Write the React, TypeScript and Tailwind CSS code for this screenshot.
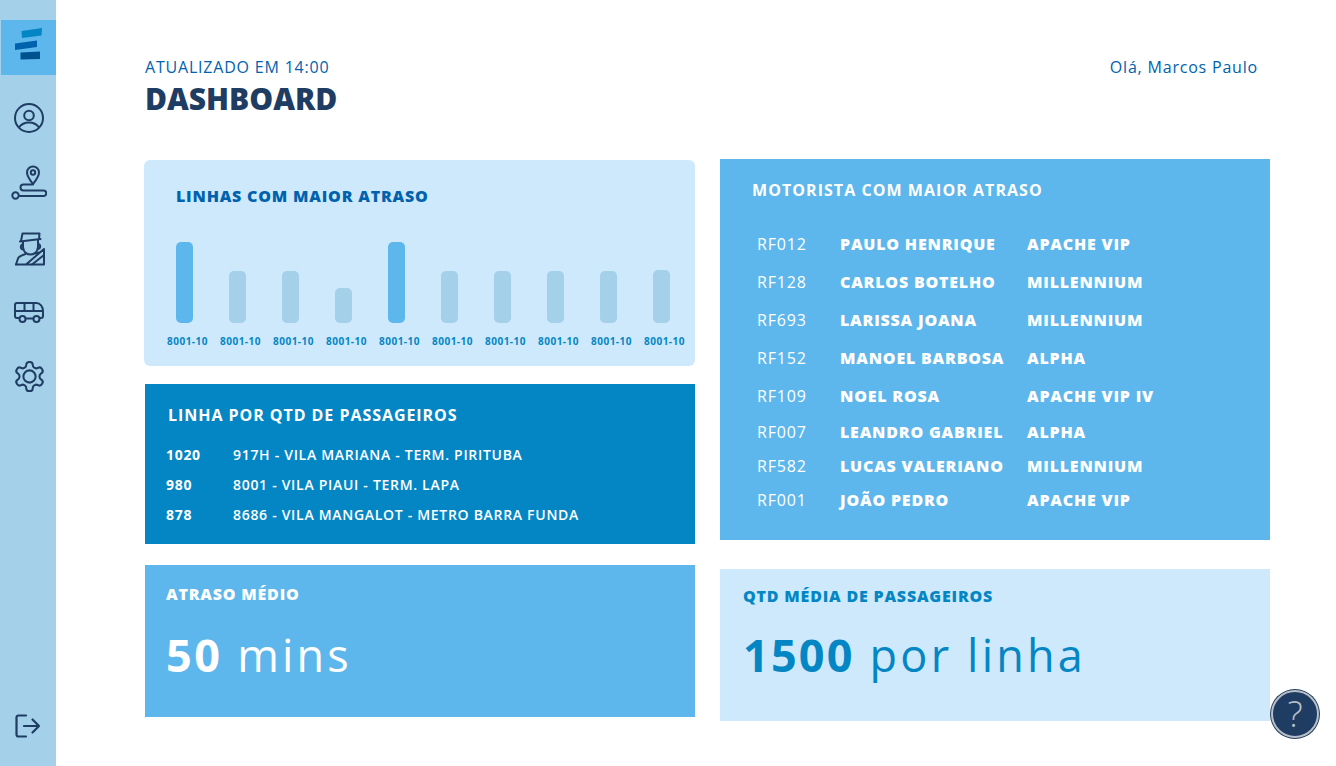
const navy = "#1f3d63";

function Logo() {
  return (
    <svg width="55" height="55" viewBox="0 0 55 55" className="block">
      <polygon points="20.500,11 41,8 40.500,15.500 21,18" fill="#0586c4" />
      <polygon points="14,23.500 36,20.500 36,27 14,30" fill="#0062ad" />
      <polygon points="19.500,32.500 39,31.500 39,39 19.500,39.500" fill="#00528f" />
    </svg>
  );
}

function IconUser() {
  return (
    <svg width="30" height="30" viewBox="0 0 30 30" fill="none" stroke={navy} strokeWidth="2" className="block">
      <circle cx="15" cy="15" r="14" />
      <circle cx="15" cy="12.500" r="4.800" />
      <path d="M5 24.500C7.500 20.800 10.500 19.500 15 19.500s7.500 1.300 10 5" />
    </svg>
  );
}

function IconRoute() {
  return (
    <svg width="36" height="35" viewBox="0 0 36 35" fill="none" stroke={navy} strokeWidth="2" strokeLinecap="round" strokeLinejoin="round" className="block">
      <path d="M22 19c-3.500-4.500-6-7.500-6-11.500a6 6 0 0 1 12 0c0 4-2.500 7-6 11.500z" />
      <circle cx="22" cy="7.500" r="2.200" />
      <path d="M22 19.500H12.500a3 3 0 0 0 0 6H32.500a2.750 2.750 0 0 1 0 5.500H8" />
      <circle cx="4.500" cy="30.500" r="3.200" />
    </svg>
  );
}

function IconDriver() {
  return (
    <svg width="30" height="34" viewBox="0 0 30 34" fill="none" stroke={navy} strokeWidth="2" strokeLinejoin="round" strokeLinecap="round" className="block">
      <path d="M6 9l1.500-7.500h17L24 7" />
      <path d="M5 9.500L25.500 7" />
      <path d="M8 10v5c0 4.500 3.500 7.500 7.500 7.500S23 19.500 23 15V8" />
      <path d="M8 12.500c-3 0-3 5 .5 5M23 12c3 0 3 5-.5 5" />
      <path d="M1 32.500l2-6c.5-1.500 3-3 7.500-4.500M20.500 21.500l3.500-1" />
      <path d="M1 32.500h28V17L11 32.500" />
      <path d="M17 32.500L29 23" />
    </svg>
  );
}

function IconBus() {
  return (
    <svg width="30" height="21" viewBox="0 0 30 21" fill="none" stroke={navy} strokeWidth="2" strokeLinejoin="round" className="block">
      <path d="M5.500 16H3A2 2 0 0 1 1 14V3a2 2 0 0 1 2-2h19.500C26 1 29 4.500 29 9v5a2 2 0 0 1-2 2h-2" />
      <path d="M11.500 16.500h8" />
      <path d="M1 9h28M10.500 1v8M19.500 1v8" />
      <circle cx="8.500" cy="17" r="3" />
      <circle cx="22.500" cy="17" r="3" />
    </svg>
  );
}

function IconGear() {
  return (
    <svg width="35" height="35" viewBox="0 0 24 24" fill="none" stroke={navy} strokeWidth="1.400" strokeLinecap="round" strokeLinejoin="round" className="block">
      <path d="M12.220 2h-.44a2 2 0 0 0-2 2v.18a2 2 0 0 1-1 1.730l-.43.250a2 2 0 0 1-2 0l-.15-.080a2 2 0 0 0-2.730.730l-.220.380a2 2 0 0 0 .730 2.730l.150.100a2 2 0 0 1 1 1.720v.510a2 2 0 0 1-1 1.740l-.150.090a2 2 0 0 0-.730 2.730l.220.380a2 2 0 0 0 2.730.730l.150-.080a2 2 0 0 1 2 0l.430.250a2 2 0 0 1 1 1.730V20a2 2 0 0 0 2 2h.440a2 2 0 0 0 2-2v-.180a2 2 0 0 1 1-1.730l.430-.250a2 2 0 0 1 2 0l.150.080a2 2 0 0 0 2.730-.730l.220-.390a2 2 0 0 0-.730-2.730l-.150-.080a2 2 0 0 1-1-1.740v-.500a2 2 0 0 1 1-1.740l.150-.090a2 2 0 0 0 .730-2.730l-.220-.380a2 2 0 0 0-2.730-.730l-.150.080a2 2 0 0 1-2 0l-.430-.250a2 2 0 0 1-1-1.730V4a2 2 0 0 0-2-2z" />
      <circle cx="12" cy="12" r="4.200" />
    </svg>
  );
}

function IconExit() {
  return (
    <svg width="26" height="24" viewBox="0 0 26 24" fill="none" stroke={navy} strokeWidth="2.200" strokeLinecap="round" strokeLinejoin="round" className="block">
      <path d="M11 1.500H3.500a2 2 0 0 0-2 2v17a2 2 0 0 0 2 2H11" />
      <path d="M9 12h15M17.500 5.500L24 12l-6.500 6.500" />
    </svg>
  );
}

const bars = [
  { h: "h-[81px]", c: "bg-[#5db7ec]" },
  { h: "h-[52px]", c: "bg-[#a4d0e9]" },
  { h: "h-[52px]", c: "bg-[#a4d0e9]" },
  { h: "h-[35px]", c: "bg-[#a4d0e9]" },
  { h: "h-[81px]", c: "bg-[#5db7ec]" },
  { h: "h-[52px]", c: "bg-[#a4d0e9]" },
  { h: "h-[52px]", c: "bg-[#a4d0e9]" },
  { h: "h-[52px]", c: "bg-[#a4d0e9]" },
  { h: "h-[52px]", c: "bg-[#a4d0e9]" },
  { h: "h-[53px]", c: "bg-[#a4d0e9]" },
];

const passengers = [
  ["1020", "917H - VILA MARIANA - TERM. PIRITUBA"],
  ["980", "8001 - VILA PIAUI - TERM. LAPA"],
  ["878", "8686 - VILA MANGALOT - METRO BARRA FUNDA"],
];

const drivers = [
  ["RF012", "PAULO HENRIQUE", "APACHE VIP", "h-[38px]"],
  ["RF128", "CARLOS BOTELHO", "MILLENNIUM", "h-[38px]"],
  ["RF693", "LARISSA JOANA", "MILLENNIUM", "h-[38px]"],
  ["RF152", "MANOEL BARBOSA", "ALPHA", "h-[38px]"],
  ["RF109", "NOEL ROSA", "APACHE VIP IV", "h-[37px]"],
  ["RF007", "LEANDRO GABRIEL", "ALPHA", "h-[35px]"],
  ["RF582", "LUCAS VALERIANO", "MILLENNIUM", "h-[34px]"],
  ["RF001", "JOÃO PEDRO", "APACHE VIP", "h-[34px]"],
];

export default function App() {
  return (
    <div className="relative flex h-[766px] w-[1336px] overflow-hidden bg-white font-['Open_Sans',sans-serif]">
      <aside className="flex w-[56px] shrink-0 flex-col items-center bg-[#a4d0e9] pb-[28px] pt-[20px]">
        <div className="ml-[1px] h-[55px] w-[55px] bg-[#5db7ec]">
          <Logo />
        </div>
        <div className="mt-[28px] ml-[2px]"><IconUser /></div>
        <div className="mt-[32px] ml-[2px]"><IconRoute /></div>
        <div className="mt-[32px] ml-[4px]"><IconDriver /></div>
        <div className="mt-[36px] ml-[2px]"><IconBus /></div>
        <div className="mt-[36px] ml-[2px]"><IconGear /></div>
        <div className="mt-auto"><IconExit /></div>
      </aside>

      <main className="flex-1 pl-[88px] pr-[66px] pt-[56px]">
        <header className="flex items-start justify-between pl-[1px] pr-[12px]">
          <div>
            <p className="text-[16px] leading-[22px] tracking-[0.8px] text-[#0062ad]">ATUALIZADO EM 14:00</p>
            <h1 className="text-[30px] font-[800] leading-[41px] text-[#1f3d63]">DASHBOARD</h1>
          </div>
          <p className="text-[16px] leading-[22px] tracking-[0.8px] text-[#0062ad]">Olá, Marcos Paulo</p>
        </header>

        <div className="mt-[40px] flex items-start gap-[25px]">
          <div className="flex w-[551px] flex-col">
            <section className="mt-[1px] h-[206px] w-[551px] rounded-[6px] bg-[#cde9fb] pt-[26px]">
              <h2 className="pl-[32px] text-[16px] font-[800] leading-[20px] tracking-[0.8px] text-[#0062ad]">LINHAS COM MAIOR ATRASO</h2>
              <div className="mt-[36px] flex h-[81px] items-end gap-[36px] pl-[32px]">
                {bars.map((b, i) => (
                  <div key={i} className={`w-[17px] rounded-[5px] ${b.h} ${b.c}`} />
                ))}
              </div>
              <div className="mt-[11px] flex gap-[12px] pl-[23px]">
                {bars.map((_, i) => (
                  <span key={i} className="w-[41px] whitespace-nowrap text-center text-[10px] font-bold leading-[14px] tracking-[0.5px] text-[#0586c4]">8001-10</span>
                ))}
              </div>
            </section>

            <section className="ml-[1px] mt-[18px] h-[160px] w-[550px] bg-[#0586c4] pl-[23px] pt-[21px] text-white">
              <h2 className="text-[16px] font-bold leading-[20px] tracking-[0.95px]">LINHA POR QTD DE PASSAGEIROS</h2>
              <div className="-ml-[2px] mt-[14px]">
                {passengers.map(([n, t]) => (
                  <div key={n} className="flex h-[30px] items-center text-[14px] tracking-[0.7px]">
                    <span className="w-[67px] font-bold">{n}</span>
                    <span className="font-semibold">{t}</span>
                  </div>
                ))}
              </div>
            </section>

            <section className="ml-[1px] mt-[21px] h-[152px] w-[550px] bg-[#5db7ec] pl-[21px] pt-[19px] text-white">
              <h2 className="text-[16px] font-[800] leading-[20px] tracking-[0.8px]">ATRASO MÉDIO</h2>
              <p className="mt-[21px] text-[45px] leading-[60px] tracking-[3.2px]"><span className="font-bold tracking-[2.4px]">50</span> mins</p>
            </section>
          </div>

          <div className="flex w-[550px] flex-col">
            <section className="h-[381px] bg-[#5db7ec] pl-[32px] pt-[21px] text-white">
              <h2 className="text-[16px] font-bold leading-[20px] tracking-[1.05px]">MOTORISTA COM MAIOR ATRASO</h2>
              <div className="mt-[25px] pl-[5px]">
                {drivers.map(([rf, name, bus, h]) => (
                  <div key={rf} className={`flex items-center ${h}`}>
                    <span className="w-[83px] text-[16px] tracking-[0.8px]">{rf}</span>
                    <span className="w-[187px] whitespace-nowrap text-[16px] font-[800] tracking-[0.8px]">{name}</span>
                    <span className="whitespace-nowrap text-[16px] font-[800] tracking-[0.8px]">{bus}</span>
                  </div>
                ))}
              </div>
            </section>
            <section className="mt-[29px] h-[152px] bg-[#cde9fb] pl-[23px] pt-[17px] text-[#0586c4]">
              <h2 className="text-[16px] font-[800] leading-[20px] tracking-[0.8px]">QTD MÉDIA DE PASSAGEIROS</h2>
              <p className="mt-[19px] text-[45px] leading-[60px] tracking-[3.2px]"><span className="font-bold tracking-[2.2px]">1500</span> por linha</p>
            </section>
          </div>
        </div>
      </main>

      <button className="absolute left-[1270px] top-[689px] h-[50px] w-[50px] rounded-full bg-[#1f3d63] p-[1px]">
        <span className="flex h-full w-full items-center justify-center rounded-full border-[2px] border-[#b9bfc6] text-[36px] font-light leading-none text-[#b9bfc6]">?</span>
      </button>
    </div>
  );
}
